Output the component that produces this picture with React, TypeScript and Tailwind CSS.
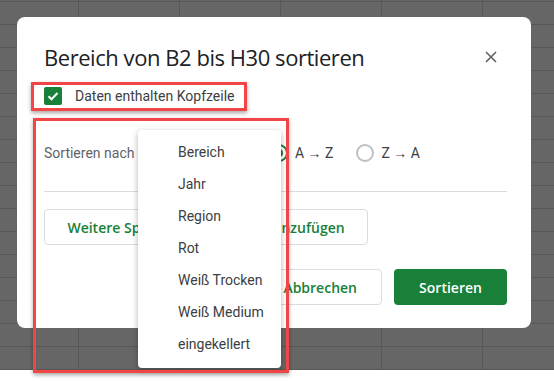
const items = ["Bereich", "Jahr", "Region", "Rot", "Weiß Trocken", "Weiß Medium", "eingekellert"]

const Radio = ({ checked, label }: { checked?: boolean; label: string }) => (
    <div className="flex items-center gap-[7px]">
        <div className={"w-[18px] h-[18px] rounded-full border-2 flex items-center justify-center " + (checked ? "border-[#188038]" : "border-[#bdc1c6]")}>
            {checked && <div className="w-2 h-2 rounded-full bg-[#188038]" />}
        </div>
        <span className="text-[14px] text-[#3c4043]">{label}</span>
    </div>
)

const App = () => {
    return (
        <div className="relative w-[554px] h-[381px] bg-white overflow-hidden font-['Roboto',sans-serif]">
            {/* sheet behind the dialog */}
            <div className="h-[370px] bg-[#666666] bg-[linear-gradient(to_right,#575757_1px,transparent_1px),linear-gradient(to_bottom,#575757_1px,transparent_1px)] bg-size-[101px_23px] bg-position-[78px_1px]" />

            {/* dialog */}
            <div className="absolute left-[17px] top-[17px] w-[514px] h-[311px] bg-white rounded-lg pl-[27px] pr-[24px] pt-[24px] flex flex-col">
                <div className="flex items-center justify-between h-8">
                    <div className="text-[22px] text-[#202124] font-['Open_Sans',sans-serif] tracking-[-0.45px]">Bereich von B2 bis H30 sortieren</div>
                    <div className="w-6 h-6 mr-1 flex items-center justify-center">
                        <svg width="12" height="12" viewBox="0 0 12 12">
                            <path d="M1 1L11 11M11 1L1 11" stroke="#5f6368" strokeWidth="1.6" />
                        </svg>
                    </div>
                </div>

                <div className="flex items-center gap-[13px] mt-[14px] h-[18px]">
                    <div className="w-[18px] h-[18px] rounded-[2px] bg-[#188038] flex items-center justify-center">
                        <svg width="14" height="14" viewBox="0 0 14 14">
                            <path d="M2.5 7.2l3 3L11.5 4" stroke="white" strokeWidth="2" fill="none" />
                        </svg>
                    </div>
                    <span className="text-[14px] text-[#3c4043]">Daten enthalten Kopfzeile</span>
                </div>

                <div className="flex items-center mt-[38px] h-[20px]">
                    <span className="text-[14px] text-[#5f6368] w-[226px]">Sortieren nach</span>
                    <div className="flex items-center gap-[23px]">
                        <Radio checked label="A → Z" />
                        <Radio label="Z → A" />
                    </div>
                </div>

                <hr className="mt-[28px] border-t border-[#dadce0]" />

                <div className="mt-[17px]">
                    <button className="h-[36px] w-[324px] border border-[#dadce0] rounded text-[14px] font-semibold text-[#188038] font-['Open_Sans',sans-serif]">
                        Weitere Spalte zum Sortieren hinzufügen
                    </button>
                </div>

                <div className="mt-[24px] flex justify-end gap-3">
                    <button className="h-[36px] px-6 border border-[#dadce0] rounded text-[14px] font-semibold text-[#188038] font-['Open_Sans',sans-serif]">
                        Abbrechen
                    </button>
                    <button className="h-[36px] w-[113px] rounded bg-[#188038] text-[14px] font-semibold text-white font-['Open_Sans',sans-serif]">
                        Sortieren
                    </button>
                </div>
            </div>

            {/* open column menu */}
            <div className="absolute left-[138px] top-[130px] w-[143px] h-[238px] bg-white rounded shadow-[0_2px_6px_rgba(0,0,0,0.3)] pt-[6px]">
                {items.map((item) => (
                    <div key={item} className="h-8 flex items-center pl-10 text-[14px] text-[#3c4043]">{item}</div>
                ))}
            </div>

            {/* annotation boxes */}
            <div className="absolute left-[31px] top-[82px] w-[216px] h-[29px] border-[3px] border-[#f24646] shadow-[0_2px_4px_rgba(0,0,0,0.35)]" />
            <div className="absolute left-[33px] top-[118px] w-[256px] h-[255px] border-[3px] border-[#f24646] shadow-[0_2px_4px_rgba(0,0,0,0.35)]" />
        </div>
    )
}
export default App
